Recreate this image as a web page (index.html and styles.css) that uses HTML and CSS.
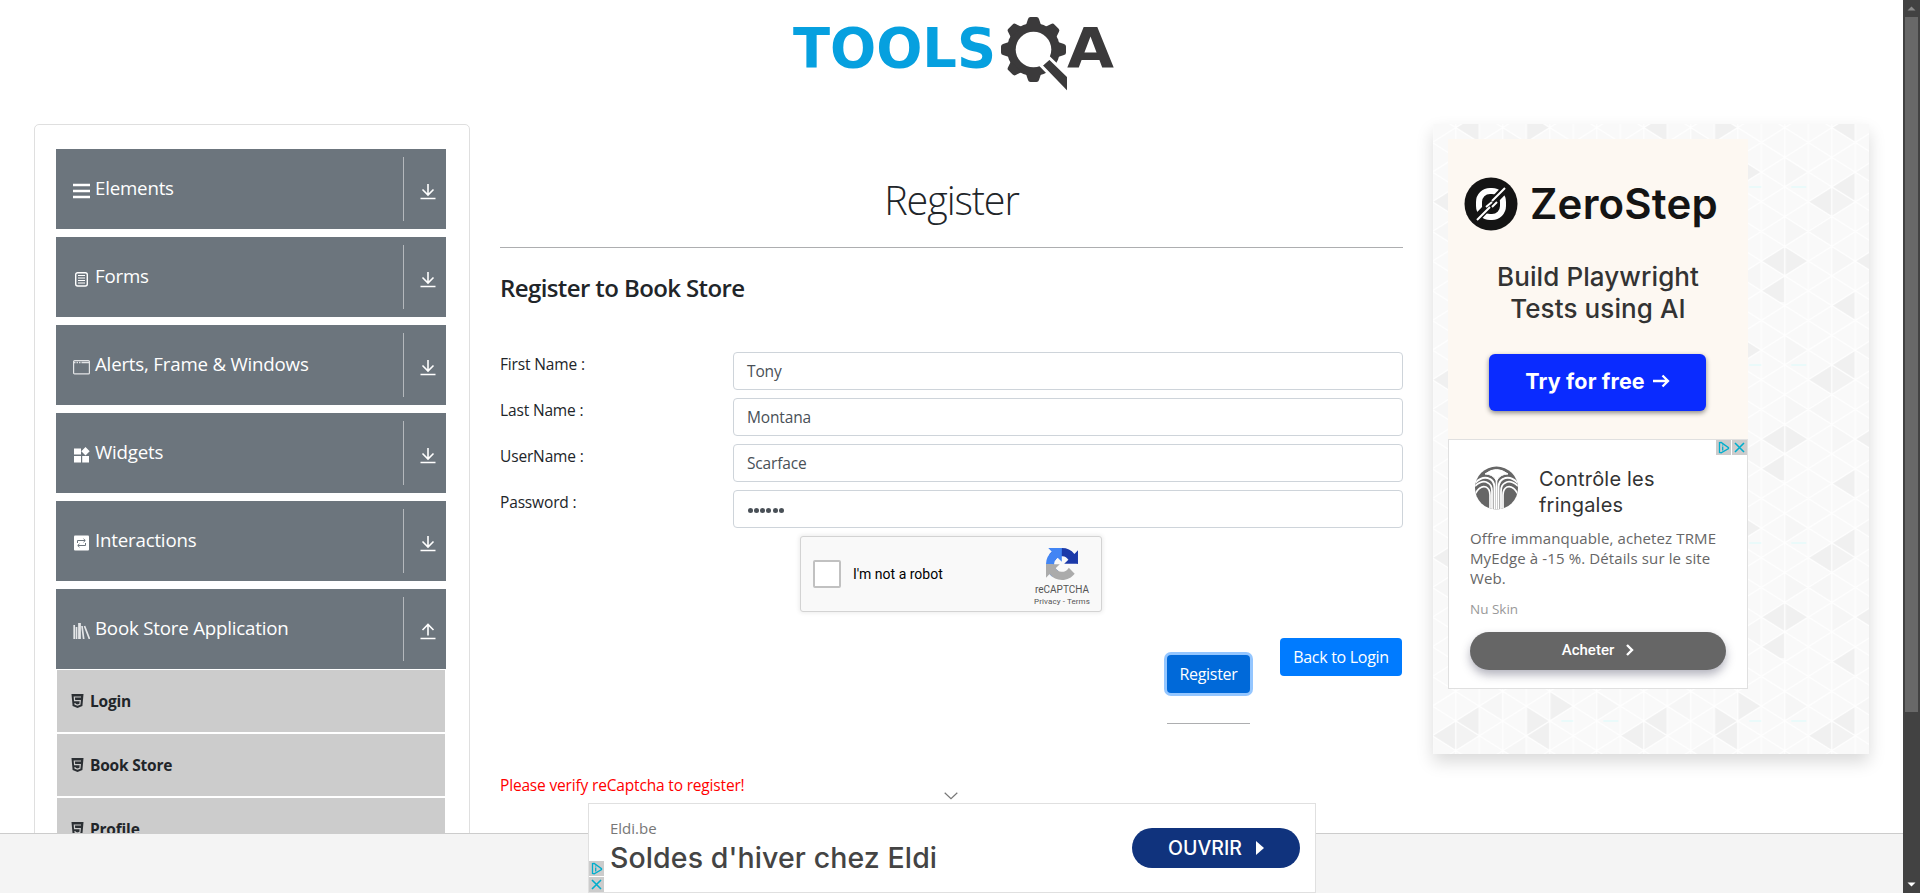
FILE: index.html
```html
<!DOCTYPE html>
<html lang="en">
<head>
<meta charset="utf-8">
<title>DEMOQA</title>
<link rel="stylesheet" href="styles.css">
</head>
<body>
<svg class="defs" width="0" height="0" aria-hidden="true">
  <symbol id="down" viewBox="0 0 16 17"><path d="M8 1v11M2.500 6.500 8 12l5.500-5.500M.5 15.500h15" fill="none" stroke="#fff" stroke-width="1.600"/></symbol>
  <symbol id="up" viewBox="0 0 16 17"><path d="M8 12.500V2M2.500 7 8 1.500 13.500 7M.5 15.500h15" fill="none" stroke="#fff" stroke-width="1.600"/></symbol>
  <symbol id="html5" viewBox="0 0 13 14"><path d="M.5 0h12l-1.100 12L6.500 14l-4.900-2z" fill="#2b2f33"/><path d="M10 3H3.300l.3 3.600h5.700l-.4 3.700-2.400.8-2.400-.8-.1-1.300" fill="none" stroke="#ccc" stroke-width="1.200"/></symbol>
  <symbol id="choice" viewBox="0 0 15 15"><path d="M3.500 2.500v10l1.700.300 7.300-4.200v-1L5.200 2.400z" fill="none" stroke="#00aecd" stroke-width="1.300"/><path d="M6.700 6.500v4M6.700 4.500v1" stroke="#00aecd" stroke-width="1.300"/></symbol>
  <symbol id="close" viewBox="0 0 15 15"><path d="m3 3 9 9m0-9-9 9" stroke="#00aecd" stroke-width="1.600"/></symbol>
</svg>
<div class="page">
  <header class="top">
    <svg width="370" height="100" viewBox="770 0 370 100" role="img">
      <text class="brand" x="793" y="67" textLength="203" lengthAdjust="spacingAndGlyphs" fill="#06a0df">TOOLS</text>
      <g fill="#3b3a3b">
        <circle cx="1033.500" cy="49.500" r="26.500"/>
        <g id="teeth">
          <path id="tooth" d="m1026 25 2-6q.5-2 2.500-2h6q2 0 2.500 2l2 6z"/>
          <use href="#tooth" transform="rotate(45 1033.500 49.500)"/><use href="#tooth" transform="rotate(90 1033.500 49.500)"/><use href="#tooth" transform="rotate(180 1033.500 49.500)"/><use href="#tooth" transform="rotate(225 1033.500 49.500)"/><use href="#tooth" transform="rotate(270 1033.500 49.500)"/><use href="#tooth" transform="rotate(315 1033.500 49.500)"/>
        </g>
        <circle cx="1033.500" cy="49.500" r="17.800" fill="#fff"/>
        <path d="m1049.500 58 19 18.500V94L1041 65.500z" stroke="#fff" stroke-width="3"/>
      </g>
      <text class="brand" x="1067" y="67" textLength="47" lengthAdjust="spacingAndGlyphs" fill="#3b3a3b">A</text>
    </svg>
  </header>
  <div class="columns">
    <nav class="side">
      <div class="group"><svg class="gi" viewBox="0 0 17 16"><path d="M0 2h17M0 8h17M0 14h17" stroke="#fff" stroke-width="2.700"/></svg><span>Elements</span><i><svg><use href="#down"/></svg></i></div>
      <div class="group"><svg class="gi" viewBox="0 0 17 16"><rect x="2.700" y="1.700" width="11.600" height="13.300" rx="2" fill="none" stroke="#fff" stroke-width="1.400"/><path d="M5 4.500h7M5 7h7M5 9.500h7M5 12h7" stroke="#fff" stroke-width="1"/></svg><span>Forms</span><i><svg><use href="#down"/></svg></i></div>
      <div class="group"><svg class="gi" viewBox="0 0 17 16"><rect x=".6" y="1.600" width="15.800" height="13.300" rx="1" fill="none" stroke="#e2e4e6" stroke-width="1.200"/><path d="M1 3.500h15" stroke="#e2e4e6" stroke-width="1.500" stroke-dasharray="1.500 1 1.500 1 1.500 1 20"/></svg><span>Alerts, Frame &amp; Windows</span><i><svg><use href="#down"/></svg></i></div>
      <div class="group"><svg class="gi" viewBox="0 0 17 16"><path d="M1 1.500h7v6H1zM1 9h7v6.500H1zM9.200 9h6.800v6.500H9.200zM12.500 0l4.200 4.200-4.200 4.200-4.200-4.200z" fill="#fff"/></svg><span>Widgets</span><i><svg><use href="#down"/></svg></i></div>
      <div class="group"><svg class="gi" viewBox="0 0 17 16"><rect x="1" y=".6" width="15" height="15" rx="1" fill="#fff"/><path d="M4.500 8V5.500H12M10.500 3.800 12.300 5.500l-1.800 1.700M12.500 8v2.500H5M6.500 8.800 4.700 10.500l1.800 1.700" fill="none" stroke="#6c757d" stroke-width="1"/></svg><span>Interactions</span><i><svg><use href="#down"/></svg></i></div>
      <div class="group open"><svg class="gi" viewBox="0 0 17 16"><path d="M1.200 2v14M3.500 4v12M6.500 0v16M9 3l1.700 13M11.500 3l5 13" fill="none" stroke="#e4e6e8" stroke-width="1.700"/><path d="M6.500 0v16" stroke="#e4e6e8" stroke-width="2.600"/></svg><span>Book Store Application</span><i><svg><use href="#up"/></svg></i></div>
      <ul class="menu">
        <li><svg><use href="#html5"/></svg><span>Login</span></li>
        <li><svg><use href="#html5"/></svg><span>Book Store</span></li>
        <li><svg><use href="#html5"/></svg><span>Profile</span></li>
      </ul>
    </nav>
    <main class="main">
      <h1><span>Register</span></h1>
      <h4><span>Register to Book Store</span></h4>
      <form class="form">
        <div class="row"><label>First Name :</label><div class="field">Tony</div></div>
        <div class="row"><label>Last Name :</label><div class="field">Montana</div></div>
        <div class="row"><label>UserName :</label><div class="field">Scarface</div></div>
        <div class="row"><label>Password :</label><div class="field dots"><b></b><b></b><b></b><b></b><b></b><b></b></div></div>
      </form>
      <div class="captcha">
        <div class="check"></div><span class="robot">I'm not a robot</span>
        <div class="rc">
          <svg width="32" height="32" viewBox="0 0 64 64"><path d="M64 31.955a33 33 0 0 0-.037-1.373V4.630l-7.174 7.174A31.936 31.936 0 0 0 32.049.094C21.679.094 12.467 5.028 6.627 12.670l11.759 11.883a15.600 15.600 0 0 1 4.764-5.350c2.055-1.603 4.966-2.914 8.899-2.914.475 0 .842.055 1.111.160 4.872.384 9.095 3.073 11.582 6.975l-8.324 8.323C46.961 31.706 58.871 31.681 64 31.955z" fill="#1c3aa9"/><path d="M31.862.094a33 33 0 0 0-1.373.038H4.536l7.174 7.173A31.936 31.936 0 0 0 0 32.045c0 10.370 4.934 19.583 12.576 25.422l11.883-11.759a15.600 15.600 0 0 1-5.350-4.764c-1.603-2.055-2.914-4.966-2.914-8.899 0-.475.055-.842.160-1.111.384-4.872 3.073-9.095 6.975-11.582l8.323 8.323C31.612 17.132 31.588 5.222 31.862.094z" fill="#4285f4"/><path d="M.001 32.045c.001.461.012.918.037 1.373V59.370l7.174-7.174a31.936 31.936 0 0 0 24.740 11.710c10.370 0 19.583-4.934 25.422-12.576L45.615 39.447a15.600 15.600 0 0 1-4.764 5.350c-2.055 1.603-4.966 2.914-8.899 2.914-.475 0-.842-.055-1.111-.160-4.872-.384-9.095-3.073-11.582-6.975l8.324-8.323C17.040 32.294 5.130 32.319.001 32.045z" fill="#ababab"/></svg>
          <span class="rc1">reCAPTCHA</span><span class="rc2">Privacy - Terms</span>
        </div>
      </div>
      <div class="actions"><div class="reg"><button class="btn focus">Register</button><hr></div><button class="btn">Back to Login</button></div>
      <p class="error">Please verify reCaptcha to register!</p>
    </main>
    <aside class="ads">
      <svg class="pattern" width="436" height="630">
        <defs><pattern id="tri" x="-.7" y="0" width="188" height="178" patternUnits="userSpaceOnUse">
          <rect width="188" height="178" fill="#f9f9f9"/>
          <g fill="#f6f6f6"><path d="M47 48 70.500 33v30zM94 107l23.500-15v30zM188 48l-23.500-15v30zM47 137l-23.500-15v30zM94 18 70.500 3v30zM117.500 152l23.500-15v30zM0 107l23.500-15v30zM70.500 92 94 78v29zM188 107l-23.500-15v30z"/></g>
          <g fill="#f0f0f0"><path d="M23.500 3.600 47-11.200v29.700zM94-11.200v29.700l23.500-14.900zM23.500 181.600 47 166.700V196zM94 166.700V196l23.500-14.400z"/><path d="M141 137l23.500-14.900 23.500 14.900-23.500 14.800zM141 166.700l23.500-14.900V181.500zM117.500 33.300 141 48.100l-23.500 14.800z"/><path d="M23.500 63 47 48.100v29.700zM0 77.800 23.500 63v29.700zM94 48.100v29.700L117.500 63zM94 77.800 117.500 63v29.700zM47 137l23.500-14.900v29.700z"/></g>
          <path d="M23.500 63v29.700L47 77.800z" fill="#f3f3f3"/>
          <g id="lines" stroke="#fff" stroke-width="1.300" fill="none">
            <path d="M0 0v178M23.500 0v178M47 0v178M70.500 0v178M94 0v178M117.500 0v178M141 0v178M164.500 0v178M188 0v178"/>
            <path d="M0-100.200l188 118.700M0-70.600 188 48.100M0-41l188 118.800M0-11.200l188 118.700M0 18.500l188 118.700M0 48.100l188 118.700M0 77.800l188 118.700M0 107.500l188 118.700M0 137.100l188 118.700M0 166.800l188 118.700"/>
            <path d="M188-100.200 0 18.500M188-70.600 0 48.100M188-41 0 77.800M188-11.200 0 107.500M188 18.500 0 137.200M188 48.100 0 166.800M188 77.800 0 196.500M188 107.500 0 226.200M188 137.100 0 255.800M188 166.800 0 285.500"/>
          </g>
          <path d="M129 63h12M171 63h15" stroke="#e6fbfb" stroke-width="1.500"/>
        </pattern></defs>
        <rect width="436" height="630" fill="url(#tri)"/>
      </svg>
      <div class="zero">
        <div class="zlogo"><svg width="54" height="54" viewBox="0 0 54 54"><circle cx="27" cy="27" r="26.500" fill="#141414"/><rect x="15" y="14" width="24" height="26" rx="11" fill="none" stroke="#fff" stroke-width="6"/><path d="M10 44 44 9" stroke="#141414" stroke-width="8"/><path d="M13 43 26 30M28 24 41 11M22 30l6-5m0 5 5-5" stroke="#fff" stroke-width="2"/></svg><b>ZeroStep</b></div>
        <p><span>Build Playwright</span><br><span>Tests using AI</span></p>
        <div class="try"><span>Try for free</span><svg width="17" height="14" viewBox="0 0 17 14"><path d="M0 7h15M9.500 1.500 15 7l-5.500 5.500" fill="none" stroke="#fff" stroke-width="2.300"/></svg></div>
      </div>
      <div class="nu">
        <div class="adc"><svg><use href="#choice"/></svg><svg><use href="#close"/></svg></div>
        <div class="nuhead"><svg width="43" height="44" viewBox="0 0 43 44"><defs><clipPath id="disc"><circle cx="21.500" cy="22" r="21.500"/></clipPath></defs><g clip-path="url(#disc)"><rect width="43" height="44" fill="#666"/><g fill="none" stroke="#fff"><path d="M10 8Q21.500-1 33 8q-8 0-11.500 7Q18 8 10 8z" fill="#fff"/><path d="M0 17q8-8 15-4 4 2 4.500 8v24M43 17q-8-8-15-4-4 2-4.500 8v24" stroke-width="2"/><path d="M0 20q8-7 13-3 4 2 4 8v20M43 20q-8-7-13-3-4 2-4 8v20" stroke-width="1.800"/><path d="M0 28q5-9 11-7 4 2 4 8v16M43 28q-5-9-11-7-4 2-4 8v16M21.500 14v30" stroke-width="1.700"/></g></g></svg><h5>Contrôle les<br>fringales</h5></div>
        <p class="offer"><span>Offre immanquable, achetez TRME</span><br><span>MyEdge à -15 %. Détails sur le site</span><br><span>Web.</span></p>
        <p class="brandname">Nu Skin</p>
        <div class="buy"><span>Acheter</span><svg width="8" height="12" viewBox="0 0 8 12"><path d="m1 1 5 5-5 5" fill="none" stroke="#fff" stroke-width="2.400"/></svg></div>
      </div>
    </aside>
  </div>
</div>
<footer class="foot"></footer>
<section class="banner">
  <svg class="fold" width="14" height="8" viewBox="0 0 14 8"><path d="m.7.700 6.300 6 6.300-6" fill="none" stroke="#777" stroke-width="1.200"/></svg>
  <div class="copy"><small>Eldi.be</small><strong>Soldes d'hiver chez Eldi</strong></div>
  <div class="ouvrir"><span>OUVRIR</span><svg width="8" height="14"><path d="M0 0l8 7-8 7z" fill="#fff"/></svg></div>
  <div class="adc left"><svg><use href="#choice"/></svg><svg><use href="#close"/></svg></div>
</section>
<div class="scroll"><svg width="17" height="17"><path d="M4.500 10.500h8l-4-4z" fill="#8a8a8a"/></svg><div class="thumb"></div><svg width="17" height="17"><path d="M4.500 6.500h8l-4 4z" fill="#fff"/></svg></div>
</body>
</html>
```
FILE: styles.css
```css
* { box-sizing: border-box; }
html, body { margin: 0; height: 893px; overflow: hidden; }
body { font: 16px/24px "Open Sans", "Noto Sans", sans-serif; color: #212529; background: #fff; position: relative; }
svg { display: block; }
.defs { position: absolute; }
.page { width: 1903px; }
.top { height: 124px; padding-left: 770px; }
.brand { font: bold 56px "DejaVu Sans", sans-serif; }
.columns { display: flex; align-items: flex-start; padding-left: 34px; }

.side { width: 436px; height: 800px; border: 1px solid #dfdfdf; border-radius: 5px; padding: 24px 23px 0 21px; }
.group { height: 80px; margin-bottom: 8px; background: #6c757d; color: #fff; display: flex; align-items: center; padding-left: 17px; font-size: 18.700px; }
.group.open { margin-bottom: 1px; }
.group > span { flex: 1; padding: 0 0 3px 5px; letter-spacing: -.2px; }
.gi { width: 17px; height: 16px; margin-top: 3px; }
.group i { width: 43px; height: 64px; border-left: 1px solid #b4b8bc; padding: 26px 0 0 16px; }
.group i svg { width: 16px; height: 17px; }
.menu { list-style: none; margin: 0 1px; padding: 0; }
.menu li { height: 62px; margin-bottom: 2px; background: #ccc; display: flex; align-items: center; padding-left: 14px; font-weight: 700; font-size: 15.500px; letter-spacing: -.2px; gap: 6px; }
.menu svg { width: 13px; height: 14px; margin-top: -1px; }

.main { width: 903px; margin-left: 30px; }
h1 { margin: 0; height: 124px; padding-top: 52px; border-bottom: 1px solid #adaeb0; font-size: 39.500px; line-height: 48px; font-weight: 300; text-align: center; letter-spacing: -1.100px; }
h4 { margin: 25px 0 49px; font-size: 24px; line-height: 30px; font-weight: 600; height: 30px; letter-spacing: -.6px; }
.row { display: flex; height: 46px; justify-content: space-between; font-size: 15.500px; letter-spacing: -.15px; }
.field { width: 670px; height: 38px; border: 1px solid #ced4da; border-radius: 4px; padding: 6px 13px; color: #495057; }
.dots { display: flex; align-items: center; gap: 1.300px; padding-left: 13.500px; }
.dots b { width: 5px; height: 5px; border-radius: 50%; background: #495057; margin-top: 2px; }
.captcha { width: 302px; height: 76px; margin-left: 300px; border: 1px solid #d3d3d3; border-radius: 3px; background: #f9f9f9; box-shadow: 0 0 4px 1px rgba(0,0,0,.08); display: flex; align-items: center; padding-left: 12px; font-family: Roboto, sans-serif; color: #000; }
.check { width: 28px; height: 28px; border: 2px solid #c1c1c1; border-radius: 2px; background: #fff; }
.robot { font-size: 14px; margin-left: 12px; flex: 1; }
.rc { width: 78px; display: flex; flex-direction: column; align-items: center; color: #555; padding-top: 7px; }
.rc1 { font-size: 10px; line-height: 11px; margin-top: 4px; }
.rc2 { font-size: 8px; line-height: 10px; margin-top: 2px; letter-spacing: .1px; }
.actions { display: flex; justify-content: flex-end; align-items: flex-start; padding: 26px 1px 0 0; gap: 30px; }
.btn { display: block; height: 38px; border: 0; border-radius: 4px; background: #007bff; color: #fff; font: 16px/24px "Open Sans", sans-serif; letter-spacing: -.3px; padding: 6px 0; width: 122px; }
.focus { width: 83px; background: #0069d9; box-shadow: 0 0 0 3px #94c6ff; }
.reg { padding-top: 17px; }
.reg hr { margin: 30px 0 0; border: 0; border-top: 1px solid #adaeb0; }
.error { color: red; margin: 49px 0 0; font-size: 15.500px; letter-spacing: -.17px; }

.ads { position: relative; width: 436px; height: 630px; margin-left: 30px; padding: 15px; box-shadow: 0 8px 16px rgba(0,0,0,.15); }
.pattern { position: absolute; left: 0; top: 0; }
.zero { position: relative; width: 300px; height: 300px; background: #fdf8f2; padding-top: 38px; font-family: Inter, sans-serif; color: #333; }
.zlogo { display: flex; align-items: center; padding-left: 16px; gap: 12px; height: 54px; }
.zlogo b { font-weight: 600; font-size: 42px; line-height: 54px; letter-spacing: .2px; color: #141414; }
.zero p { margin: 30px 0 0; text-align: center; font-size: 26px; line-height: 32px; font-weight: 500; letter-spacing: .1px; }
.try { width: 217px; height: 57px; margin: 29px 0 0 41px; border-radius: 6px; background: #0a2bff; box-shadow: 0 2px 5px rgba(0,0,0,.45); display: flex; justify-content: center; align-items: center; gap: 8px; color: #fff; font-weight: 700; font-size: 21.500px; letter-spacing: .15px; padding-bottom: 3px; }
.nu { position: relative; width: 300px; height: 250px; background: #fff; border: 1px solid #e0e0e0; padding: 26px 21px 0; font-family: "Open Sans", sans-serif; }
.adc { position: absolute; right: 0; top: 0; display: flex; gap: 1px; }
.adc svg { width: 15px; height: 15px; background: #ccc; }
.nuhead { display: flex; padding-left: 5px; gap: 21px; height: 62px; }
.nuhead h5 { margin: 0; font: 400 20px/26px Inter, sans-serif; letter-spacing: .2px; color: #333; }
.offer { margin: 0; font-size: 15px; line-height: 20px; color: #666; letter-spacing: .12px; }
.brandname { margin: 12px 0 0; font-size: 13.500px; line-height: 18px; color: #999; }
.buy { height: 38px; width: 256px; margin-top: 14px; border-radius: 19px; background: #666; color: #fff; display: flex; justify-content: center; align-items: center; gap: 12px; font: 500 15px/20px Roboto, sans-serif; padding-bottom: 2px; box-shadow: 0 5px 10px rgba(40,40,70,.35); }

.foot { position: absolute; left: 0; top: 833px; width: 1903px; height: 60px; background: #f4f4f4; border-top: 1px solid #ccc; }
.banner { position: absolute; left: 588px; top: 803px; width: 728px; height: 90px; background: #fff; border: 1px solid #e0e0e0; display: flex; justify-content: space-between; padding: 0 15px 0 21px; }
.fold { position: absolute; left: 355px; top: -12px; }
.copy { display: flex; flex-direction: column; padding-top: 14px; color: #777; }
.copy small { font-size: 15px; line-height: 20px; }
.copy strong { font: 500 28.500px/40px Inter, sans-serif; letter-spacing: .1px; color: #444; }
.ouvrir { margin-top: 24px; width: 168px; height: 40px; border-radius: 20px; background: #10337d; color: #fff; display: flex; align-items: center; justify-content: center; gap: 14px; font: 500 19.500px/24px Inter, sans-serif; }
.adc.left { left: 0; right: auto; top: 57px; flex-direction: column; }
.scroll { position: absolute; right: 0; top: 0; width: 17px; height: 893px; background: #424242; display: flex; flex-direction: column; justify-content: space-between; }
.thumb { height: 695px; width: 13px; margin: 0 2px auto; background: #686868; }
```
